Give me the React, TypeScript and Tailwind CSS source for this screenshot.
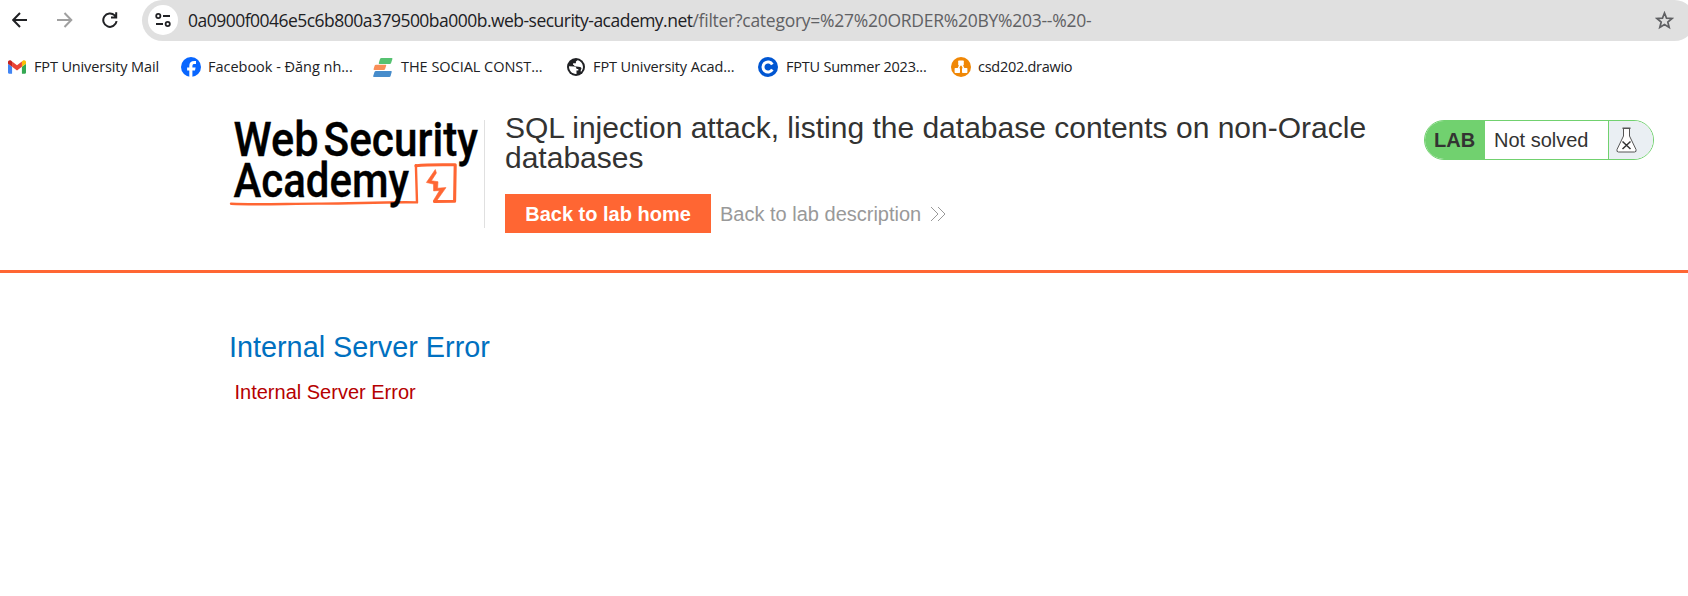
import type { ReactNode } from "react";

function Bookmark({ icon, label, className }: { icon: ReactNode; label: string; className: string }) {
  return (
    <div className={`flex h-[30px] shrink-0 items-center whitespace-nowrap ${className}`}>
      {icon}
      <span>{label}</span>
    </div>
  );
}

const GmailIcon = () => (
  <svg className="mr-2 h-[14px] w-[18px]" viewBox="52 42 88 66">
    <path fill="#4285f4" d="M58 108h14V74L52 59v43c0 3.32 2.69 6 6 6" />
    <path fill="#34a853" d="M120 108h14c3.32 0 6-2.69 6-6V59l-20 15" />
    <path fill="#fbbc04" d="M120 48v26l20-15v-8c0-7.42-8.47-11.65-14.4-7.2" />
    <path fill="#ea4335" d="M72 74V48l24 18 24-18v26L96 92" />
    <path fill="#c5221f" d="M52 51v8l20 15V48l-5.6-4.2c-5.94-4.45-14.4-.22-14.4 7.2" />
  </svg>
);

const FacebookIcon = () => (
  <svg className="mr-[7px] size-5" viewBox="0 0 20 20">
    <circle cx="10" cy="10" r="10" fill="#0866ff" />
    <path fill="#fff" d="M8.300 20v-6.600H6.100v-3h2.200V9c0-3.500 1.600-5.100 5-5.100.6 0 1.200.1 1.700.2v2.800h-1.500c-1.500 0-2.100.6-2.100 2.100v1.400h3.200l-.6 3h-2.600V20z" />
  </svg>
);

const StackIcon = () => (
  <svg className="mr-2 h-5 w-5" viewBox="0 0 20 20">
    <path fill="#56c271" d="M8.500 1h10.200q1 0 .7.900l-1.300 4q-.3 1-1.300 1H6.500q-1 0-.7-1L7 2q.4-1 1.500-1z" />
    <path fill="#f98e57" d="M3 7.700h9.500q1 0 .7.900l-1.100 3.500q-.3.900-1.300.9H1.300q-1 0-.7-.9l1.100-3.500Q2 7.700 3 7.700z" />
    <path fill="#468ccb" d="M3 14h15q1 0 .7.900l-1.100 4q-.3 1-1.300 1H.9q-1 0-.7-1l1.300-4Q1.900 14 3 14z" />
  </svg>
);

const GlobeIcon = () => (
  <svg className="mr-2 size-[18px]" viewBox="0 0 18 18">
    <circle cx="9" cy="9" r="9" fill="#202124" />
    <path fill="#fff" d="M2 8.200l5 .2c1.700.1 2.600 1 2.600 2.500h1.700v1.700H9.500v3.300C5.300 16.200 1.800 12.700 2 8.200z" />
    <path fill="#fff" d="M10.500 2.200c3 .6 5.400 3.400 5.500 6.700-.1 2.100-.8 3.800-2.100 5.100l-.2-2.100c1.200-1 1-2.700-.6-2.900L9.600 8.600c-1.500 0-2.500-.7-2.600-1.700h-.9V5.200h2.800V3.600z" />
  </svg>
);

const CourseraIcon = () => (
  <svg className="mr-2 size-5" viewBox="0 0 20 20">
    <circle cx="10" cy="10" r="10" fill="#0056d2" />
    <path fill="none" stroke="#fff" strokeWidth="3" d="M14.300 7.500A5 5 0 1 0 14.300 12.500" />
  </svg>
);

const DrawioIcon = () => (
  <svg className="mr-[7px] size-5" viewBox="0 0 20 20">
    <circle cx="10" cy="10" r="10" fill="#f08705" />
    <path stroke="#fff" strokeWidth="1.600" d="M10 6L6.500 13M10 6l3.500 7" />
    <g fill="#fff">
      <rect x="7.200" y="3.500" width="5.600" height="5" rx=".7" />
      <rect x="3.600" y="11" width="5.400" height="5" rx=".7" />
      <rect x="11" y="11" width="5.400" height="5" rx=".7" />
    </g>
  </svg>
);

const Logo = () => (
  <svg className="h-[92px] w-[255px] shrink-0 overflow-visible" viewBox="229 115 255 92">
    <g fill="none" stroke="#ff6633" strokeLinecap="round" strokeLinejoin="round">
      <path strokeWidth="2.400" d="M231 203.800C260 205 290 203.500 320 203.600S385 201.800 417 202.400L415.900 165.300" />
      <path strokeWidth="3.100" d="M416 165.800C430 164.300 442 165 455.200 164.700L454.600 201.300L434.500 201.500" />
    </g>
    <path
      fill="#ff6633"
      stroke="#ff6633"
      strokeWidth=".6"
      strokeLinejoin="round"
      d="M435.300 169.500l1.100 3.500-5 7.800 6.600.9-.4 6.500 8.400-.6-9.500 13.400-3.200-.2 6.200-10.300-5.900.4-.1-6.800-7.100-1.600z"
    />
    <g
      className="font-[Roboto,sans-serif] text-[48px] leading-none font-medium"
      fill="#000"
      stroke="#000"
      strokeWidth=".35"
    >
      <text x="233.500" y="156" textLength="85" lengthAdjust="spacingAndGlyphs">Web</text>
      <text x="323.500" y="156" textLength="154.500" lengthAdjust="spacingAndGlyphs">Security</text>
      <text x="233.500" y="197" textLength="175.500" lengthAdjust="spacingAndGlyphs">Academy</text>
    </g>
  </svg>
);

export default function App() {
  return (
    <div className="h-[596px] w-full overflow-hidden bg-white font-['Liberation_Sans',Arial,sans-serif] text-[#333332]">
      <div className="flex h-[41px] items-center overflow-hidden">
        <svg className="mb-[2px] ml-[12px] h-4 w-4 shrink-0" viewBox="0 0 16 16" fill="none" stroke="#202124" strokeWidth="2">
          <path d="M15 8H1.500M8 1L1.200 8L8 15" />
        </svg>
        <svg className="mb-[2px] ml-[29px] h-4 w-4 shrink-0" viewBox="0 0 16 16" fill="none" stroke="#a0a0a0" strokeWidth="2">
          <path d="M0 8H14M7.500 1L14.300 8L7.500 15" />
        </svg>
        <svg className="mb-[2px] ml-[29px] h-4 w-4 shrink-0" viewBox="0 0 16 16" fill="none" stroke="#202124" strokeWidth="2">
          <path d="M14.600 9.200A6.700 6.700 0 1 1 12.700 3.400L14 5M14.200 .3V5.500H9" />
        </svg>
        <div className="-mr-[7px] ml-6 flex h-[41px] grow items-center rounded-full bg-[#e0e0e0] pr-[21px] pl-[6px]">
          <div className="mb-px flex size-[30px] shrink-0 items-center justify-center rounded-full bg-white">
            <svg className="size-4" viewBox="0 0 16 16" fill="none" stroke="#202124" strokeWidth="1.800">
              <circle cx="3.300" cy="4" r="2.100" />
              <path d="M8 4h7M1 12h7" />
              <circle cx="12.700" cy="12" r="2.100" />
            </svg>
          </div>
          <div className="mb-[2px] ml-[10px] grow font-['Open_Sans',sans-serif] text-[17.5px] leading-6 whitespace-nowrap">
            <span className="tracking-[-0.52px] text-[#202124]">0a0900f0046e5c6b800a379500ba000b.web-security-academy.net</span>
            <span className="tracking-[-0.26px] text-[#606164]">/filter?category=%27%20ORDER%20BY%203--%20-</span>
          </div>
          <svg className="size-[19px] shrink-0" viewBox="0 0 19 19" fill="none" stroke="#5f6063" strokeWidth="1.700">
            <path d="M9.500 2L11.500 7.100L17 7.500L12.800 11L14.200 16.500L9.500 13.500L4.800 16.500L6.200 11L2 7.500L7.500 7.100Z" />
          </svg>
        </div>
      </div>

      <div className="flex h-[52px] items-center font-['Open_Sans',sans-serif] text-[14.5px] text-[#202124]">
        <Bookmark className="w-[173px] pl-2 tracking-[-0.14px]" icon={<GmailIcon />} label="FPT University Mail" />
        <Bookmark className="w-[192px] pl-2 tracking-[-0.02px]" icon={<FacebookIcon />} label="Facebook - Đăng nh..." />
        <Bookmark className="w-[194px] pl-2 tracking-[-0.03px]" icon={<StackIcon />} label="THE SOCIAL CONST..." />
        <Bookmark className="w-[191px] pl-2 tracking-[-0.1px]" icon={<GlobeIcon />} label="FPT University Acad..." />
        <Bookmark className="w-[193px] pl-2 tracking-[-0.22px]" icon={<CourseraIcon />} label="FPTU Summer 2023..." />
        <Bookmark className="pl-2 tracking-[-0.28px]" icon={<DrawioIcon />} label="csd202.drawio" />
      </div>

      <header className="flex h-[180px] items-start border-b-[3px] border-[#ff6633] pt-[22px] pl-[229px]">
        <Logo />
        <div className="mt-[5px] h-[108px] w-px shrink-0 bg-[#e0e0e0]" />
        <div className="ml-5 w-[900px] shrink-0">
          <h2 className="mt-[-2px] text-[30px] leading-[30px]">
            SQL injection attack, listing the database contents on non-Oracle databases
          </h2>
          <div className="mt-[21px] flex items-center">
            <a className="flex h-[39px] w-[206px] items-center justify-center bg-[#ff6633] text-[20px] font-bold text-white">Back to lab home</a>
            <a className="ml-[9px] text-[20px] text-[#999]">Back to lab description</a>
            <svg className="ml-[9px] h-4 w-[17px]" viewBox="0 0 17 16" fill="none" stroke="#999" strokeWidth="1">
              <path d="M1 1L8 8L1 15M8 1L15 8L8 15" />
            </svg>
          </div>
        </div>
        <div className="mt-[5px] ml-[19px] flex h-10 w-[230px] shrink-0 overflow-hidden rounded-[20px] border border-[#71d16f] bg-white text-[20px]">
          <div className="flex w-[60px] items-center bg-[#71d16f] pl-[9px] font-bold">LAB</div>
          <div className="flex w-[123px] items-center pl-[9px]">Not solved</div>
          <div className="flex grow items-center border-l border-[#71d16f] bg-[#eaeff3] pl-[7px]">
            <svg className="h-[26px] w-[21px]" viewBox="0 0 21 26" fill="#fff" stroke="#555" strokeWidth="1">
              <path d="M7.500 1.500V9L1 22.500Q.3 25 2.500 25H18.500Q20.700 25 20 22.500L13.500 9V1.500" />
              <path d="M6.500 1.200H14.500" strokeWidth="1.600" />
              <path d="M6.500 14.500L14.500 22M14.500 14.500L6.500 22" stroke="#333" strokeWidth="1.500" />
            </svg>
          </div>
        </div>
      </header>

      <main className="pl-[229px]">
        <h1 className="pt-[57px] text-[28.8px] leading-[34px] text-[#0070c0]">Internal Server Error</h1>
        <p className="mt-4 pl-[5.5px] text-[20px] leading-6 text-[#b60000]">Internal Server Error</p>
      </main>
    </div>
  );
}
